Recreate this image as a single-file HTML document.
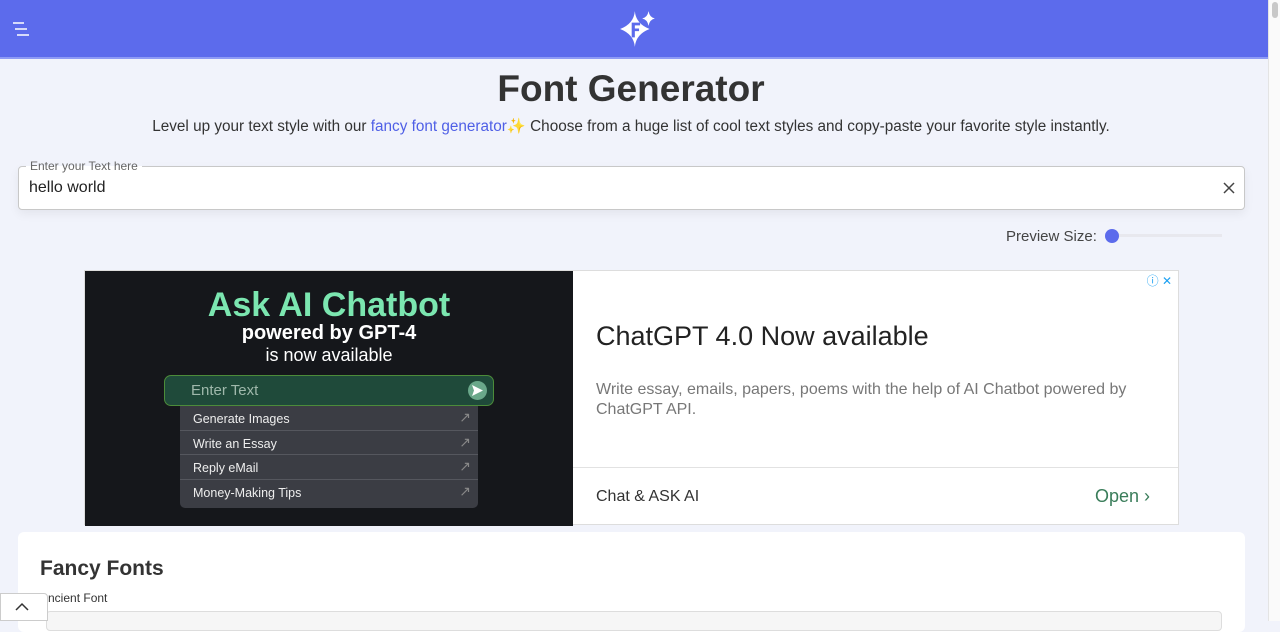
<!DOCTYPE html>
<html><head><meta charset="utf-8"><style>
*{box-sizing:border-box;margin:0;padding:0}
body{width:1280px;height:621px;overflow:hidden;background:#f1f3fb;font-family:"Liberation Sans",sans-serif;position:relative}
.hdr{position:absolute;left:0;top:0;width:1268px;height:59px;background:#5c6bec;border-bottom:2px solid #8e9bf5}
.sb{position:absolute;right:0;top:0;width:12px;height:621px;background:#fafafa;border-left:1px solid #e4e4e4}
.sb div{position:absolute;left:3px;top:2px;width:6px;height:16px;background:#c8c8c8;border-radius:3px}
h1{position:absolute;left:0;width:1262px;top:68px;text-align:center;font-size:37px;font-weight:bold;color:#333}
.sub{position:absolute;left:0;width:1262px;top:117px;text-align:center;font-size:15.3px;color:#333}
.sub span{color:#4f5fe6}
.inp{position:absolute;left:18px;top:166px;width:1227px;height:44px;background:#fff;border:1px solid #c8c8c8;border-radius:4px;box-shadow:0 4px 10px rgba(0,0,0,.06)}
.inp .lbl{position:absolute;left:7px;top:-8px;background:linear-gradient(#f1f3fb 50%,#fff 50%);padding:0 4px;font-size:12px;color:#666}
.inp .v{position:absolute;left:10px;top:12px;font-size:16px;color:#222}
.ps{position:absolute;left:1006px;top:228px;font-size:15px;color:#444}
.track{position:absolute;left:1112px;top:234px;width:110px;height:3px;background:#e8e8ee}
.knob{position:absolute;left:1105px;top:229px;width:14px;height:14px;border-radius:50%;background:#5c6bec}
.ad{position:absolute;left:84px;top:270px;width:1095px;height:255px;background:#fff;border:1px solid #ddd}
.adl{position:absolute;left:0;top:0;width:488px;height:255px;background:#15171b;color:#fff;text-align:center}
.t1{position:absolute;left:0;right:0;top:15px;font-size:34px;font-weight:bold;color:#7be6b0}
.t2{position:absolute;left:0;right:0;top:51px;font-size:20px;font-weight:bold}
.t3{position:absolute;left:0;right:0;top:74px;font-size:18px}
.ent{position:absolute;left:79px;top:104px;width:330px;height:31px;background:#1f4a3a;border:1px solid #4c8c3a;border-radius:7px;text-align:left;padding:6px 26px;color:#9fb8ab;font-size:15px}
.ent i{position:absolute;right:6px;top:5px;width:19px;height:19px;border-radius:50%;background:#6aa88a}
.ent i svg{position:absolute;left:4px;top:4px}
.menu{position:absolute;left:95px;top:135px;width:298px;height:102px;background:#3b3d44;border-radius:0 0 5px 5px;text-align:left}
.menu div{height:24.5px;border-bottom:1px solid #55575e;font-size:12.5px;padding:6px 13px 0;color:#eee;position:relative}
.menu div:after{content:"↗";position:absolute;right:7px;top:3px;color:#888;font-size:14px}
.adr{position:absolute;left:488px;top:0;right:0;height:255px}
.h2{position:absolute;left:23px;top:50px;font-size:27px;color:#222}
.desc{position:absolute;left:23px;top:109px;width:570px;font-size:16px;color:#777;line-height:20px}
.foot{position:absolute;left:0;right:0;top:196px;border-top:1px solid #e2e2e2;height:59px}
.foot .a{position:absolute;left:23px;top:20px;font-size:16px;color:#333}
.foot .b{position:absolute;right:28px;top:18px;font-size:18px;color:#3a7d5a}
.ic{position:absolute;right:6px;top:1px;font-size:12px;color:#1da1f2}
.card{position:absolute;left:18px;top:532px;width:1227px;height:100px;background:#fff;border-radius:6px}
.card h3{position:absolute;left:22px;top:25px;font-size:21px;color:#333}
.card p{position:absolute;left:22px;top:59px;font-size:12px;color:#333}
.card .bar{position:absolute;left:28px;top:79px;width:1176px;height:20px;border:1px solid #ddd;border-radius:4px;background:#f6f6f6}
.up{position:absolute;left:0;top:593px;width:48px;height:28px;background:#fff;border:1px solid #ccc;border-radius:0 4px 0 0}
</style></head><body>
<div class="hdr">
<svg style="position:absolute;left:12px;top:20px" width="28" height="18"><path d="M1 3h11M3 9h12M5 15h12" stroke="#fff" stroke-width="1.6"/></svg>
<svg style="position:absolute;left:618px;top:9px" width="40" height="40" viewBox="0 0 38 38"><path d="M16 2Q17 14 30 19Q17 24 16 36Q15 24 2 19Q15 14 16 2Z" fill="#fff"/><path d="M29 2Q30 8 35 9Q30 10 29 16Q28 10 23 9Q28 8 29 2Z" fill="#fff"/><path d="M13 13h8v2.5h-5v3h4v2.5h-4v6h-3z" fill="#5c6bec"/></svg>
</div>
<div class="sb"><div></div></div>
<h1>Font Generator</h1>
<div class="sub">Level up your text style with our <span>fancy font generator</span>✨ Choose from a huge list of cool text styles and copy-paste your favorite style instantly.</div>
<div class="inp"><span class="lbl">Enter your Text here</span><span class="v">hello world</span>
<svg style="position:absolute;right:9px;top:15px" width="12" height="12"><path d="M1 1L11 11M11 1L1 11" stroke="#444" stroke-width="1.5"/></svg></div>
<div class="ps">Preview Size:</div><div class="track"></div><div class="knob"></div>
<div class="ad">
<div class="adl"><div class="t1">Ask AI Chatbot</div><div class="t2">powered by GPT-4</div><div class="t3">is now available</div>
<div class="ent">Enter Text<i><svg width="11" height="11"><path d="M0 0L11 5.5L0 11L2 5.5Z" fill="#fff"/></svg></i></div>
<div class="menu"><div>Generate Images</div><div>Write an Essay</div><div>Reply eMail</div><div style="border:0">Money-Making Tips</div></div></div>
<div class="adr"><span class="ic">ⓘ ✕</span><div class="h2">ChatGPT 4.0 Now available</div>
<div class="desc">Write essay, emails, papers, poems with the help of AI Chatbot powered by ChatGPT API.</div>
<div class="foot"><span class="a">Chat &amp; ASK AI</span><span class="b">Open ›</span></div></div>
</div>
<div class="card"><h3>Fancy Fonts</h3><p>Ancient Font</p><div class="bar"></div></div>
<div class="up"><svg style="position:absolute;left:14px;top:8px" width="14" height="10"><path d="M1 8L7 2L13 8" stroke="#333" stroke-width="1.5" fill="none"/></svg></div>
</body></html>
